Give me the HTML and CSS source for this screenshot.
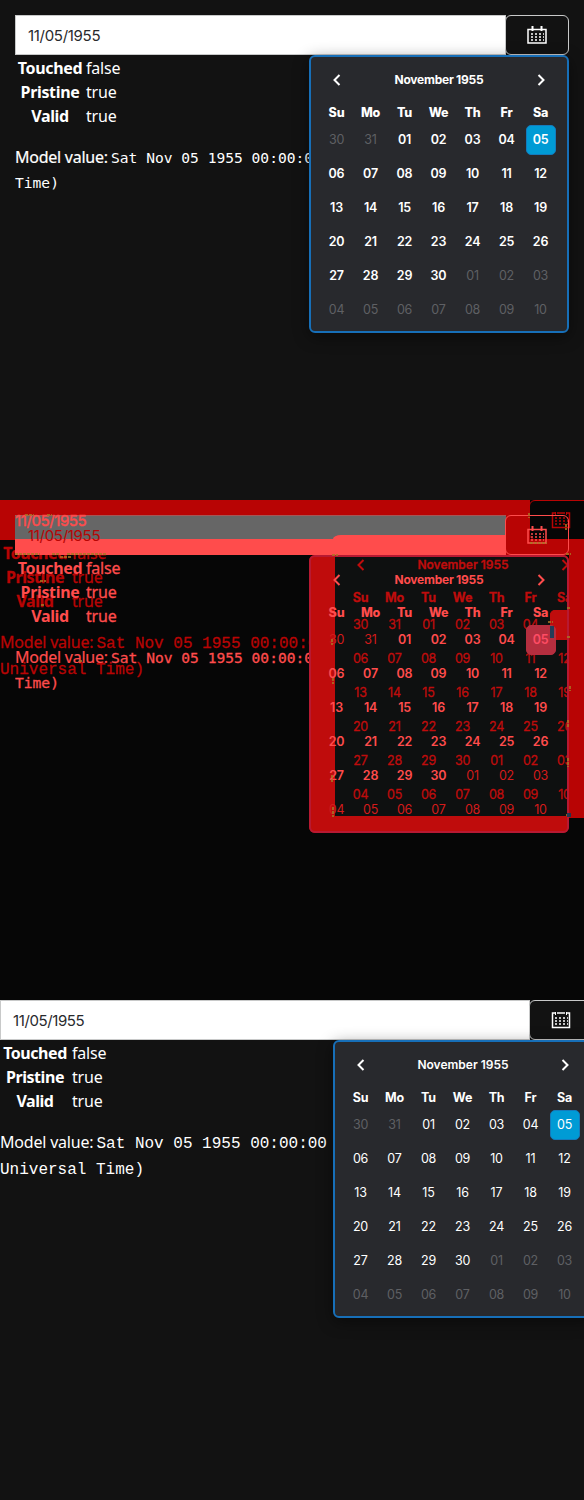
FILE: index.html
```
<!DOCTYPE html>
<html lang="en">
<head>
<meta charset="utf-8">
<title>Datepicker comparison</title>
<link rel="stylesheet" href="styles.css">
</head>
<body>
<main>
  <section class="panel"><div class="scene before" data-icon="rings"></div></section>
  <section class="panel diff">
    <div class="scene after ghost" data-icon="plain"></div>
    <div class="shape input-gray"></div>
    <div class="shape input-bright"></div>
    <div class="shape input-shadow"></div>
    <div class="shape button-left"></div>
    <div class="shape button-bottom"></div>
    <div class="shape pop-right"></div>
    <div class="shape pop-fill"></div>
    <div class="shape pop-overlap"></div>
    <div class="shape day-overlap"></div>
    <div class="scene before bright" data-icon="rings"></div>
    <svg class="specks" width="584" height="500" viewBox="0 0 584 500">
      <path d="M25 15h9M47 15h5M15 54h25M52 54h8M67 54h40M60 57h12M40 81h6M41 105h3M79 161h3M332 55h6M332 139v6M333 178v6M332 275v8M333 307v10M566 24v6M529 13v5M530 43h17M566 54h5M567 108h4M567 137h4M570 186v5M568 220v7M568 258v9M566 315h5M548 122h5"/>
      <path class="blue" d="M552 126v12M569 313v4"/>
    </svg>
  </section>
  <section class="panel"><div class="scene after" data-icon="plain"></div></section>
</main>
<script src="main.js"></script>
</body>
</html>
```
FILE: styles.css
```
* { box-sizing: border-box; }
body { margin: 0; background: #121212; color: #fff; font: 16px/24px "Noto Sans", sans-serif; }
.panel { position: relative; height: 500px; overflow: hidden; background: #121212; isolation: isolate; }
.scene { position: relative; width: 593px; }
.scene.before { width: 554px; margin: 15px 0 0 15px; }
.panel > .scene.before { float: left; }

.field { display: flex; height: 40px; }
.input { flex: 1; display: flex; align-items: center; padding-left: 12px; background: #fff; border: 1px solid #c8c9c9; color: #28292d; font: 15px Inter, sans-serif; }
.input span { letter-spacing: -.3px; }
.after .input span { letter-spacing: -.4px; }
.toggle { width: 64px; margin-left: -1px; display: flex; align-items: center; justify-content: center; padding-right: 1px; border: 1px solid #c8c9c9; border-radius: 6px; color: #fff; background: #121212; }
.toggle svg { width: 20px; height: 20px; fill: none; stroke: currentColor; stroke-width: 1.5; }
.toggle .dots { stroke-dasharray: 2 2; }

.status { display: grid; grid-template-columns: 66px auto; column-gap: 3px; padding: 1px 0 0 2px; }
.status b { text-align: center; letter-spacing: -.35px; }
.status span { letter-spacing: -.2px; }
.after .status { column-gap: 4px; }
.after .status b { letter-spacing: -.45px; }
.model { margin: 16px 0 0; line-height: 26px; white-space: nowrap; }
.before .model { margin-top: 17px; line-height: 25px; }
.label { display: inline-block; width: 96.5px; letter-spacing: -.2px; }
.before .label { width: 96px; letter-spacing: -.25px; -webkit-text-stroke: .2px; }
.model code { font: 16px/1 "Liberation Mono", monospace; }
.before .model code { font: 14.6px/1 "DejaVu Sans Mono", monospace; }

.popover { position: absolute; top: 40px; left: 333px; width: 260px; height: 278px; padding: 0 9px; border: 2px solid #176fb8; border-radius: 6px; background: #28292d; box-shadow: 0 4px 16px rgba(0,0,0,.45); font: 12.5px Inter, sans-serif; }
.before .popover { left: 294px; }
.head { height: 46px; display: flex; align-items: center; justify-content: space-between; padding: 0 12px; font-size: 12px; font-weight: 700; letter-spacing: -.25px; }
.head span { position: relative; top: -1px; }
.head svg { width: 10px; height: 12px; fill: none; stroke: currentColor; stroke-width: 2; }
.after .head { font-weight: 600; letter-spacing: 0; }
.days { display: grid; grid-template-columns: repeat(7, 34px); grid-template-rows: 20px repeat(6, 34px); }
.days span { display: grid; place-items: center; padding: 0 1px 2px 0; letter-spacing: -.2px; }
.days .name { font-weight: 800; }
.after .days .name { font-weight: 700; }
.before .day { font-weight: 600; }
.days .day.muted { color: #5f6064; font-weight: 400; }
.day.selected { margin: 2px; background: #009bd5; border: 1px solid #147bbd; border-radius: 5px; }

.diff { background: #060606; color: #b80404; }
.ghost { position: absolute; top: 0; left: 0; color: #b80404; }
.diff .scene { position: absolute; }
.diff .toggle { background: none; }
.diff .popover { background: none; box-shadow: none; }
.ghost .input { background: #b80404; border-color: #b80404; color: #ff4c4c; }
.ghost .input span { position: relative; z-index: 3; left: 2px; -webkit-text-stroke: .4px; }
.ghost .status, .ghost .model, .ghost .popover { -webkit-text-stroke: .3px; }
.ghost .toggle { border-color: #b80404; color: #b80404; }
.ghost .toggle svg { position: relative; z-index: 3; }
.ghost .popover { z-index: 3; border-color: transparent; color: #bf0c0c; clip-path: inset(0 24px 0 0); }
.ghost .day.muted, .ghost .selected { color: #bf0c0c; }
.ghost .day.selected { background: #bf0c0c; border-color: #bf0c0c; }
.bright { z-index: 4; color: #ff4c4c; }
.bright .status span, .bright .model { -webkit-text-stroke: .3px; }
.bright .input { background: none; border-color: transparent; color: #b80404; }
.bright .toggle { color: #ff4c4c; border-color: #ff4c4c; }
.bright .model { width: 294px; overflow: hidden; }
.bright .popover { color: #ff4c4c; border-color: #b71932; }
.bright .day.muted { color: #d41b1b; }
.bright .day.selected { color: #ff4c64; background: #b52e3f; border-color: #b52e3f; }
.shape { position: absolute; }
.input-gray { left: 15px; top: 15px; width: 491px; height: 24px; background: #666; border-top: 1px solid #a45757; }
.input-bright { left: 15px; top: 39px; width: 491px; height: 16px; background: #ff4c4c; }
.input-shadow { left: 333px; top: 35px; width: 173px; height: 20px; background: #ff4c4c; border-top-left-radius: 8px 4px; }
.button-left { left: 506px; top: 15px; width: 24px; height: 24px; background: #b80404; }
.button-bottom { left: 506px; top: 39px; width: 63px; height: 16px; background: #b80404; }
.pop-right { left: 569px; top: 39px; width: 15px; height: 279px; background: #b80404; }
.pop-fill { z-index: 2; left: 309px; top: 55px; width: 260px; height: 278px; background: #bf0c0c; border-radius: 6px; }
.pop-overlap { z-index: 2; left: 335px; top: 57px; width: 232px; height: 259px; background: #0e1010; }
.day-overlap { z-index: 2; left: 550px; top: 110px; width: 19px; height: 30px; background: #bf0c0c; border-radius: 5px; }
.specks { position: absolute; inset: 0; z-index: 5; fill: none; stroke: #aa7624; stroke-width: 2; stroke-dasharray: 3 1; opacity: .8; }
.specks .blue { stroke: #00405e; stroke-width: 4; stroke-dasharray: none; }
```
FILE: main.js
```
const icons = {
  rings: '<path d="M1 4.5h18v13.5H1z"/><path d="M5.5 1v5M14.5 1v5" stroke-width="2"/><path class="dots" d="M4 9h13M4 12h13M4 15h13"/>',
  plain: '<path d="M4 3H1.5v14.5h17V3H16M6 3h8"/><path d="M4.5 2v3M15.5 2v3" stroke-width="1"/><path class="dots" d="M4 8h13M4 11h13M4 14h13" stroke-width="1.3"/>'
};
const pad = n => String(n).padStart(2, '0');
const days = [30, 31, ...Array.from({ length: 30 }, (_, i) => i + 1), ...Array.from({ length: 10 }, (_, i) => i + 1)];

document.querySelectorAll('.scene').forEach(scene => {
  const before = scene.classList.contains('before');
  const names = ['Su', 'Mo', 'Tu', 'We', 'Th', 'Fr', 'Sa'].map(n => `<span class="name">${n}</span>`).join('');
  const cells = days.map((n, i) => {
    const state = i < 2 || i > 31 ? ' muted' : i === 6 ? ' selected' : '';
    return `<span class="day${state}">${pad(n)}</span>`;
  }).join('');
  scene.innerHTML = `
    <div class="field"><div class="input"><span>11/05/1955</span></div>
      <div class="toggle"><svg viewBox="0 0 20 20">${icons[scene.dataset.icon]}</svg></div></div>
    <div class="status"><b>Touched</b><span>false</span><b>Pristine</b><span>true</span><b>Valid</b><span>true</span></div>
    <p class="model"><span class="label">Model value:</span><code>Sat Nov 05 1955 00:00:0${before ? '' : '0'}</code><br><code>${before ? 'Time)' : 'Universal Time)'}</code></p>
    <div class="popover">
      <div class="head"><svg viewBox="0 0 10 12"><path d="M7.5 1L2.5 6l5 5"/></svg><span>November 1955</span><svg viewBox="0 0 10 12"><path d="M2.5 1l5 5-5 5"/></svg></div>
      <div class="days">${names}${cells}</div>
    </div>`;
});
```
